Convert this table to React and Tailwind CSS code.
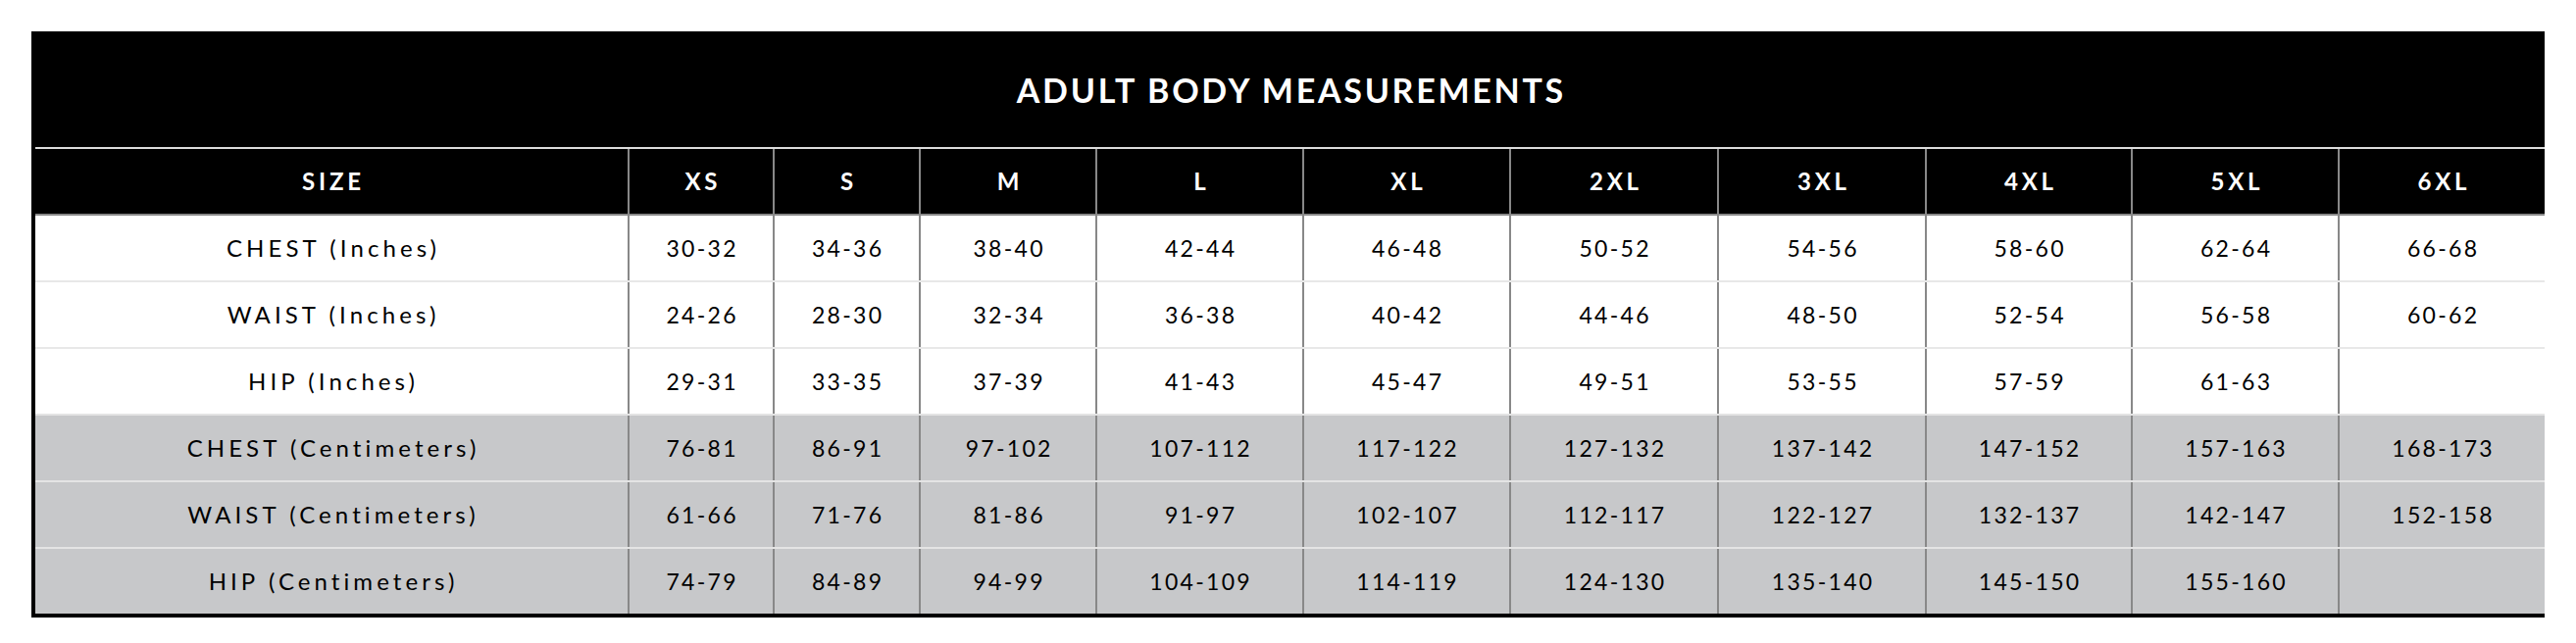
const SIZES = ["XS", "S", "M", "L", "XL", "2XL", "3XL", "4XL", "5XL", "6XL"];

const ROWS = [
  { label: "CHEST (Inches)", values: ["30-32", "34-36", "38-40", "42-44", "46-48", "50-52", "54-56", "58-60", "62-64", "66-68"], metric: false },
  { label: "WAIST (Inches)", values: ["24-26", "28-30", "32-34", "36-38", "40-42", "44-46", "48-50", "52-54", "56-58", "60-62"], metric: false },
  { label: "HIP (Inches)", values: ["29-31", "33-35", "37-39", "41-43", "45-47", "49-51", "53-55", "57-59", "61-63", ""], metric: false },
  { label: "CHEST (Centimeters)", values: ["76-81", "86-91", "97-102", "107-112", "117-122", "127-132", "137-142", "147-152", "157-163", "168-173"], metric: true },
  { label: "WAIST (Centimeters)", values: ["61-66", "71-76", "81-86", "91-97", "102-107", "112-117", "122-127", "132-137", "142-147", "152-158"], metric: true },
  { label: "HIP (Centimeters)", values: ["74-79", "84-89", "94-99", "104-109", "114-119", "124-130", "135-140", "145-150", "155-160", ""], metric: true },
];

const GRID = "grid grid-cols-[604px_148px_149px_180px_211px_211px_212px_212px_210px_211px_211px]";

export default function App() {
  return (
    <div className="w-[2627px] h-[656px] bg-white pt-[32px] pl-[32px]" style={{ fontFamily: "Lato, 'Open Sans', sans-serif" }}>
      <div className="w-[2563px] border-l-4 border-b-4 border-black">
        {/* Title */}
        <div className="h-[118px] bg-black flex items-center justify-center">
          <h1 className="text-white font-bold text-[34px] tracking-[0.08em] pl-[0.08em]">ADULT BODY MEASUREMENTS</h1>
        </div>
        <div className="h-[2px] bg-[#dcdcdc]" />

        {/* Header */}
        <div className={`${GRID} h-[68px] bg-black border-b-2 border-[#888888]`}>
          <div className="flex items-center justify-center text-white font-bold text-[24px] tracking-[0.16em] pl-[0.16em]">SIZE</div>
          {SIZES.map((s) => (
            <div key={s} className="flex items-center justify-center border-l-2 border-[#888888] text-white font-bold text-[24px] tracking-[0.16em] pl-[0.16em]">
              {s}
            </div>
          ))}
        </div>

        {/* Body */}
        {ROWS.map((row, i) => (
          <div
            key={row.label}
            className={`${GRID} ${i === 0 ? "h-[66px]" : "h-[68px] border-t-2"} ${row.metric ? "bg-[#c7c8ca] border-[#e4e4e4]" : "bg-white border-[#e8e8e8]"}`}
          >
            <div className="flex items-center justify-center text-black text-[24px] tracking-[0.17em] pl-[0.17em]">{row.label}</div>
            {row.values.map((v, j) => (
              <div key={j} className="flex items-center justify-center border-l-2 border-[#888888] text-black text-[23px] tracking-[0.1em] pl-[0.1em]">
                {v}
              </div>
            ))}
          </div>
        ))}
      </div>
    </div>
  );
}
